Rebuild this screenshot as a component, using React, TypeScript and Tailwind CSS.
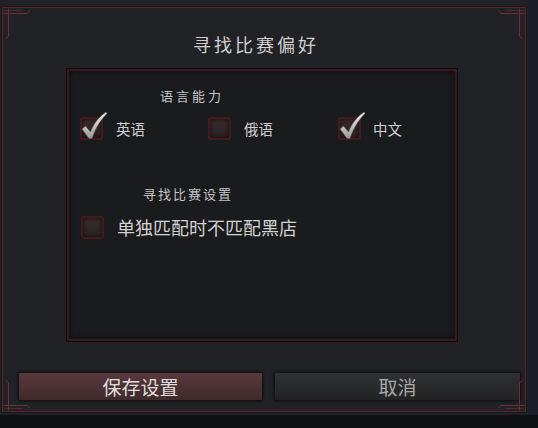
import React from 'react';

const cjk = { fontFamily: '"Noto Sans CJK SC", "Noto Sans", sans-serif' };

const Corner = ({ className }: { className: string }) => (
  <svg width="30" height="34" viewBox="0 0 30 34" className={`absolute ${className}`} fill="none" stroke="#6b3036" strokeWidth="1">
    <path d="M0.5 5.5 H24 L27 2.5" />
    <path d="M5.5 0.5 V28 L2.5 31" />
    <path d="M0.5 2.5 H20" opacity="0.6" />
  </svg>
);

const Checkbox = ({ checked }: { checked?: boolean }) => (
  <div className="relative w-[23px] h-[23px] shrink-0">
    <div className="w-full h-full rounded-[3px] border-2 border-[#451a1f] bg-gradient-to-b from-[#3a2a2c] to-[#2a2224] shadow-[inset_0_0_4px_rgba(0,0,0,0.7)]" />
    {checked && (
      <svg width="28" height="30" viewBox="0 0 28 30" className="absolute left-[1px] top-[-6px]">
        <defs>
          <linearGradient id="ck" x1="0" y1="0" x2="0" y2="1">
            <stop offset="0" stopColor="#f2f2f2" />
            <stop offset="1" stopColor="#9a9a9a" />
          </linearGradient>
        </defs>
        <path d="M1 18 L4.5 15 L9.5 21 C13 12 18 6 25 1 L26 2.5 C19.5 9 14.5 17 11 27.5 L8 27.5 Z" fill="url(#ck)" stroke="#505050" strokeWidth="0.5" />
      </svg>
    )}
  </div>
);

export default function App() {
  return (
    <div className="relative w-[538px] h-[428px] bg-[#0f1012] overflow-hidden" style={cjk}>
      <div className="w-[528px] h-[415px] bg-[#202225] pt-[7px] pl-[2px]">
        <div className="relative w-[524px] h-[405px] border border-[#5a262c] shadow-[0_0_0_1px_#1a1416]">
          <Corner className="left-0 top-0" />
          <Corner className="right-0 top-0 -scale-x-100" />
          <Corner className="left-0 bottom-0 -scale-y-100" />
          <Corner className="right-0 bottom-0 -scale-100" />

          <div className="pt-[24px] pl-[190px] text-[18px] leading-[24px] tracking-[3px] text-[#cfcfcf]">
            寻找比赛偏好
          </div>

          <div className="mt-[13px] ml-[64px] w-[390px] h-[272px] bg-[#1a1b1d] border-2 border-[#3a1a1f] shadow-[0_0_0_1px_#0c0c0d,inset_0_0_6px_rgba(0,0,0,0.6)]">
            <div className="pt-[16px] pl-[91px] text-[13px] leading-[18px] tracking-[3px] text-[#c4c4c4]">
              语言能力
            </div>
            <div className="mt-[12px] pl-[11px] flex items-center">
              <div className="flex items-center gap-[13px] w-[128px]">
                <Checkbox checked />
                <span className="text-[14.5px] text-[#cfcfcf]">英语</span>
              </div>
              <div className="flex items-center gap-[13px] w-[130px]">
                <Checkbox />
                <span className="text-[14.5px] text-[#cfcfcf]">俄语</span>
              </div>
              <div className="flex items-center gap-[12px]">
                <Checkbox checked />
                <span className="text-[14.5px] text-[#cfcfcf]">中文</span>
              </div>
            </div>
            <div className="mt-[45px] pl-[74px] text-[13px] leading-[18px] tracking-[2px] text-[#c4c4c4]">
              寻找比赛设置
            </div>
            <div className="mt-[12px] pl-[12px] flex items-center gap-[13px]">
              <Checkbox />
              <span className="text-[18px] leading-[24px] text-[#d2d2d2]">单独匹配时不匹配黑店</span>
            </div>
          </div>

          <div className="mt-[31px] ml-[15px] flex gap-[11px]">
            <button className="w-[245px] h-[29px] rounded-[2px] bg-gradient-to-b from-[#57393c] to-[#3f2a2c] border border-[#1a1112] shadow-[0_0_3px_rgba(0,0,0,0.8)] text-[19px] leading-[27px] text-[#e0dede]">
              保存设置
            </button>
            <button className="w-[247px] h-[29px] rounded-[2px] bg-gradient-to-b from-[#2e3032] to-[#222325] border border-[#141415] shadow-[0_0_3px_rgba(0,0,0,0.8)] text-[19px] leading-[27px] text-[#a9a9a9]">
              取消
            </button>
          </div>
        </div>
      </div>
      <div className="absolute right-0 top-0 w-[10px] h-[415px] bg-[#1b1e29]" />
    </div>
  );
}
